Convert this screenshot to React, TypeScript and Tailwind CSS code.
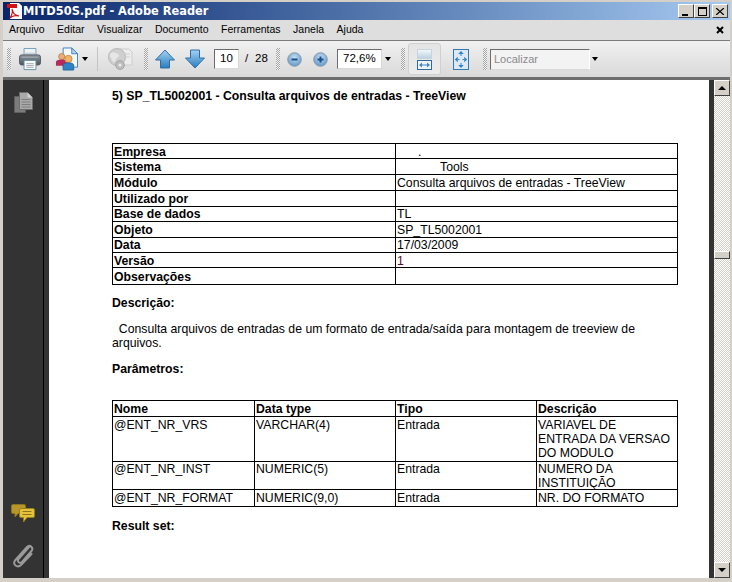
import React from "react";

const Grip = ({ className = "" }: { className?: string }) => (
  <div className={`w-[4px] h-[22px] shrink-0 bg-[repeating-conic-gradient(#a3a3a3_0_25%,#f4f4f4_0_50%)] bg-[length:2px_2px] ${className}`} />
);

const Caret = ({ className = "" }: { className?: string }) => (
  <svg width="6" height="4" viewBox="0 0 6 4" className={`shrink-0 ${className}`}>
    <path d="M0 0h6L3 4z" fill="#000" />
  </svg>
);

const Printer = () => (
  <svg width="22" height="23" viewBox="0 0 24 25" className="shrink-0">
    <defs>
      <linearGradient id="pb" x1="0" y1="0" x2="0" y2="1">
        <stop offset="0" stopColor="#8c959c" />
        <stop offset="1" stopColor="#4e565d" />
      </linearGradient>
    </defs>
    <path d="M5.500.5h13v8h-13z" fill="#eef3f6" stroke="#6f9db3" />
    <path d="M6.500 5h11v3h-11z" fill="#c4d3dc" />
    <rect x=".5" y="7.500" width="23" height="11" rx="2.500" fill="url(#pb)" stroke="#50585f" />
    <path d="M3 10h18" stroke="#a9b1b7" />
    <path d="M5.500 13.500h13v10h-13z" fill="#f7f9fa" stroke="#5f8da5" />
    <path d="M8 17h8M8 19h8M8 21h8" stroke="#9aa6ae" />
  </svg>
);

const Share = () => (
  <svg width="23" height="24" viewBox="0 0 24 24" className="shrink-0">
    <path d="M8.500 .5h9l6 6v14h-15z" fill="#f5f9fd" stroke="#3f7fc0" />
    <path d="M17.500 .5v6h6z" fill="#bcd6ee" stroke="#3f7fc0" />
    <circle cx="7" cy="9.500" r="3.200" fill="#e9ae7c" stroke="#c58546" />
    <path d="M1 19v-4c0-1.500 2-2.500 6-2.500s6 1 6 2.500v4z" fill="#b52a58" />
    <circle cx="14" cy="12" r="3.800" fill="#f2b36a" stroke="#cf8a3a" />
    <path d="M8.500 23.500v-5c0-1.500 2.500-2.500 5.500-2.500s5.500 1 5.500 2.500v5z" fill="#2f82c4" stroke="#23679f" />
  </svg>
);

const Globe = () => (
  <svg width="26" height="24" viewBox="0 0 26 24" className="shrink-0">
    <path d="M13 2h9l3 3v13H13z" fill="#ededed" stroke="#cdcdcd" />
    <circle cx="10" cy="10" r="8.500" fill="#cfcfcf" stroke="#b8b8b8" />
    <path d="M4 6c3-2 5 0 7 1s1 3-1 4-1 4-3 4-2-3-3-4-2-3 0-5z" fill="#e6e6e6" />
    <path d="M17 7h6M17 10h6" stroke="#cfcfcf" />
    <circle cx="13" cy="18" r="4.400" fill="#bdbdbd" stroke="#a6a6a6" />
    <circle cx="13" cy="18" r="1.500" fill="#ececec" />
  </svg>
);

const Arrow = ({ down = false }: { down?: boolean }) => (
  <svg width="20" height="20" viewBox="0 0 20 20" className="shrink-0">
    <defs>
      <linearGradient id={down ? "ad" : "au"} x1="0" y1="0" x2="0" y2="1">
        <stop offset="0" stopColor="#a3d3f3" />
        <stop offset="1" stopColor="#2a7cbf" />
      </linearGradient>
    </defs>
    <path
      d={down ? "M5.500 1h9v8h5L10 19 .5 9h5z" : "M10 1l9.500 10h-5v8h-9v-8h-5z"}
      fill={`url(#${down ? "ad" : "au"})`}
      stroke="#2e6ea5"
      strokeLinejoin="round"
    />
  </svg>
);

const Zoomer = ({ plus = false }: { plus?: boolean }) => (
  <svg width="15" height="15" viewBox="0 0 15 15" className="shrink-0">
    <defs>
      <radialGradient id={plus ? "zp" : "zm"} cx="0.5" cy="0.35" r="0.65">
        <stop offset="0" stopColor="#c5def2" />
        <stop offset="1" stopColor="#5f98c9" />
      </radialGradient>
    </defs>
    <circle cx="7.500" cy="7.500" r="6.800" fill={`url(#${plus ? "zp" : "zm"})`} stroke="#8e9ba8" />
    <path d={plus ? "M4.500 7.500h6M7.500 4.500v6" : "M4.500 7.500h6"} stroke="#164f8c" strokeWidth="2" />
  </svg>
);

const FitWidth = () => (
  <svg width="15" height="21" viewBox="0 0 15 21" className="shrink-0">
    <defs>
      <linearGradient id="fw" x1="0" y1="0" x2="0" y2="1">
        <stop offset="0" stopColor="#f6f9fb" />
        <stop offset="1" stopColor="#b9d0e2" />
      </linearGradient>
    </defs>
    <rect x=".5" y=".5" width="14" height="9" fill="url(#fw)" stroke="#c7d4de" />
    <rect x=".5" y="11.500" width="14" height="9" fill="#eef4f9" stroke="#2f6a9e" />
    <path d="M3 16h9" stroke="#3d86c2" />
    <path d="M2 16l3-2.500v5zM13 16l-3-2.500v5z" fill="#3d86c2" />
  </svg>
);

const FitPage = () => (
  <svg width="16" height="21" viewBox="0 0 16 21" className="shrink-0">
    <rect x=".5" y=".5" width="15" height="20" fill="#dce9f4" stroke="#3478ad" />
    <path d="M8 2l-2.800 3h5.600zM8 19l-2.800-3h5.600zM1.800 10.500l3-2.800v5.600zM14.200 10.500l-3-2.800v5.600z" fill="#2f83c4" />
    <path d="M8 5v2M8 14v2M5 10.500h1.500M9.500 10.500H11" stroke="#2f83c4" />
  </svg>
);

const PagesIcon = () => (
  <svg width="19" height="21" viewBox="0 0 19 21" className="shrink-0">
    <path d="M.5 4.500h11v16H.5z" fill="#7b7b7b" stroke="#5f5f5f" />
    <path d="M5.500.5h8l5 5v12h-13z" fill="#a9a9a9" stroke="#6e6e6e" />
    <path d="M13.500.5v5h5z" fill="#d0d0d0" />
    <path d="M7.500 7.500h9M7.500 10h9M7.500 12.500h9M7.500 15h9" stroke="#7e7e7e" />
  </svg>
);

const Comments = () => (
  <svg width="24" height="19" viewBox="0 0 24 19" className="shrink-0">
    <path d="M2 .5h11A1.500 1.500 0 0 1 14.500 2v6A1.500 1.500 0 0 1 13 9.500H7L4 13V9.500H2A1.500 1.500 0 0 1 .5 8V2A1.500 1.500 0 0 1 2 .5z" fill="#b8962a" stroke="#8a7420" />
    <path d="M10 4.500h12A1.500 1.500 0 0 1 23.500 6v6a1.500 1.500 0 0 1-1.500 1.500h-6L12.500 18v-4.500H10A1.500 1.500 0 0 1 8.500 12V6A1.500 1.500 0 0 1 10 4.500z" fill="#e5c23a" stroke="#94801f" />
    <path d="M11.500 7.500h9M11.500 10.500h9" stroke="#8a7420" />
  </svg>
);

const Clip = () => (
  <svg width="22" height="24" viewBox="0 0 22 24" className="shrink-0">
    <path
      d="M17 3L6.500 15c-2 2.500 1.500 5 3.500 3L19.500 7c2.500-3-1.500-7-4.500-4L3 16.500c-3 4 2.500 8 6 4.500l10.500-11"
      fill="none"
      stroke="#9a9a9a"
      strokeWidth="2"
      strokeLinecap="round"
    />
  </svg>
);

const WinBtn = ({ children, className = "" }: { children: React.ReactNode; className?: string }) => (
  <div className={`w-[16px] h-[14px] bg-[#d4d0c8] border border-t-white border-l-white border-r-[#404040] border-b-[#404040] flex items-center justify-center ${className}`}>
    {children}
  </div>
);

const rows1: { k: string; v: React.ReactNode; h: string; nudge?: boolean }[] = [
  { k: "Empresa", v: <span className="pl-[21px]">.</span>, h: "h-[15px]", nudge: true },
  { k: "Sistema", v: <span className="pl-[43px]">Tools</span>, h: "h-[16px]" },
  { k: "Módulo", v: "Consulta arquivos de entradas - TreeView", h: "h-[16px]" },
  { k: "Utilizado por", v: "", h: "h-[16px]" },
  { k: "Base de dados", v: "TL", h: "h-[15px]" },
  { k: "Objeto", v: "SP_TL5002001", h: "h-[16px]" },
  { k: "Data", v: "17/03/2009", h: "h-[15px]" },
  { k: "Versão", v: <span className="text-[#5a0a28]">1</span>, h: "h-[15px]", nudge: true },
  { k: "Observações", v: "", h: "h-[17px]", nudge: true },
];

const rows2 = [
  { h: "h-[45px]", inner: "h-[44px] pt-[1px]", c: ["@ENT_NR_VRS", "VARCHAR(4)", "Entrada", "VARIAVEL DE ENTRADA DA VERSAO DO MODULO"] },
  { h: "h-[28px]", inner: "h-[27px]", c: ["@ENT_NR_INST", "NUMERIC(5)", "Entrada", "NUMERO DA INSTITUIÇÃO"] },
  { h: "h-[17px]", inner: "h-[16px] pt-[1px]", c: ["@ENT_NR_FORMAT", "NUMERIC(9,0)", "Entrada", "NR. DO FORMATO"] },
];

const field = "h-[20px] shrink-0 bg-white border border-t-[#6c6c6c] border-l-[#6c6c6c] border-r-[#d8d8d8] border-b-[#d8d8d8] flex items-center";

export default function App() {
  return (
    <div className="w-[732px] h-[582px] overflow-hidden bg-[#d4d0c8] pt-[2px] pl-[3px] pb-[4px] pr-[2px] flex flex-col font-['Liberation_Sans',sans-serif] text-black">
      {/* Title bar */}
      <div className="h-[18px] shrink-0 flex items-center bg-gradient-to-r from-[#0a246a] to-[#a6caf0] pl-[4px] pr-[2px]">
        <svg width="16" height="16" viewBox="0 0 16 16" className="shrink-0">
          <path d="M3 0h9l3 3v13H3z" fill="#fff" />
          <path d="M0 1h10v4H0z" fill="#d0121b" />
          <path d="M5 6c1 4 2 6 7 7-4-1-7 0-9 2 2-3 3-6 2-9z" fill="none" stroke="#d0121b" strokeWidth="1.200" />
        </svg>
        <span className="text-white font-bold text-[11.4px] font-['DejaVu_Sans',sans-serif] leading-[18px]">MITD50S.pdf - Adobe Reader</span>
        <div className="ml-auto flex">
          <WinBtn><div className="w-[6px] h-[2px] bg-black mt-[7px] mr-[2px]" /></WinBtn>
          <WinBtn><div className="w-[9px] h-[9px] border border-black border-t-2" /></WinBtn>
          <WinBtn className="ml-[2px]">
            <svg width="8" height="7" viewBox="0 0 8 7"><path d="M0 0l8 7M8 0L0 7" stroke="#000" strokeWidth="1.300" /></svg>
          </WinBtn>
        </div>
      </div>

      {/* Menu bar */}
      <div className="h-[20px] shrink-0 bg-[#dedede] flex items-center pl-[6px] pr-[6px] text-[10.5px] gap-[12.5px]">
        {["Arquivo", "Editar", "Visualizar", "Documento", "Ferramentas", "Janela", "Ajuda"].map((m) => (
          <span key={m}>{m}</span>
        ))}
        <svg width="8" height="8" viewBox="0 0 8 8" className="ml-auto"><path d="M1 1l6 6M7 1L1 7" stroke="#000" strokeWidth="2" /></svg>
      </div>

      {/* Toolbar */}
      <div className="h-[37px] shrink-0 border-t border-[#7c7c7c] bg-gradient-to-b from-[#f1f1f1] to-[#d9d9d9] flex items-center text-[11.5px] pl-[4px]">
        <Grip />
        <div className="ml-[8px]"><Printer /></div>
        <div className="ml-[14px]"><Share /></div>
        <Caret className="ml-[4px]" />
        <div className="ml-[9px] w-px h-[24px] bg-[#c4c4c4]" />
        <div className="ml-[9px]"><Globe /></div>
        <Grip className="ml-[11px]" />
        <div className="ml-[7px]"><Arrow /></div>
        <div className="ml-[10px]"><Arrow down /></div>
        <div className={`ml-[9px] w-[25px] justify-center ${field}`}>10</div>
        <span className="ml-[6px] w-[4px]">/</span>
        <span className="ml-[6px] w-[12px]">28</span>
        <Grip className="ml-[9px]" />
        <div className="ml-[7px]"><Zoomer /></div>
        <div className="ml-[11px]"><Zoomer plus /></div>
        <div className={`ml-[9px] w-[45px] pl-[5px] ${field}`}>72,6%</div>
        <Caret className="ml-[3px]" />
        <Grip className="ml-[10px]" />
        <div className="ml-[3px] w-[33px] h-[32px] shrink-0 rounded-[3px] bg-gradient-to-b from-[#e4e4e4] to-[#ececec] border border-[#d0d0d0] flex items-center justify-center"><FitWidth /></div>
        <div className="ml-[12px]"><FitPage /></div>
        <Grip className="ml-[14px]" />
        <div className="ml-[3px] w-[100px] h-[21px] shrink-0 bg-[#f3f3f3] border border-t-[#6c6c6c] border-l-[#6c6c6c] border-r-white border-b-[#d8d8d8] flex items-center pl-[3px] text-[11px] text-[#8a8a8a]">Localizar</div>
        <Caret className="ml-[2px]" />
      </div>

      {/* Content */}
      <div className="flex-1 min-h-0 flex border-t-[3px] border-[#6e6e6e] bg-[#333333]">
        <div className="w-[41px] shrink-0 border-r border-black flex flex-col items-center pt-[12px] pb-[10px]">
          <PagesIcon />
          <div className="mt-auto flex flex-col items-center">
            <Comments />
            <div className="mt-[21px]"><Clip /></div>
          </div>
        </div>
        <div className="w-[5px] shrink-0" />
        <div className="w-[660px] shrink-0 bg-white pl-[63px] overflow-hidden text-[12.25px] leading-[14px]">
          <p className="font-bold mt-[9px]">5) SP_TL5002001 - Consulta arquivos de entradas - TreeView</p>
          <table className="mt-[40px] w-[565px] table-fixed border-collapse">
            <colgroup>
              <col className="w-[283px]" />
              <col className="w-[282px]" />
            </colgroup>
            <tbody>
              {rows1.map((r) => (
                <tr key={r.k} className={r.h}>
                  <td className={`border border-black pl-[1px] font-bold align-middle ${r.nudge ? "pt-[2px] leading-[12px]" : ""}`}>{r.k}</td>
                  <td className={`border border-black pl-[1px] align-middle whitespace-nowrap ${r.nudge ? "pt-[2px] leading-[12px]" : ""}`}>{r.v}</td>
                </tr>
              ))}
            </tbody>
          </table>
          <p className="font-bold mt-[11px]">Descrição:</p>
          <p className="mt-[12px] w-[540px]">&nbsp;&nbsp;Consulta arquivos de entradas de um formato de entrada/saída para montagem de treeview de arquivos.</p>
          <p className="font-bold mt-[12px]">Parâmetros:</p>
          <table className="mt-[24px] w-[565px] table-fixed border-collapse">
            <colgroup>
              <col className="w-[142px]" />
              <col className="w-[141px]" />
              <col className="w-[141px]" />
              <col className="w-[141px]" />
            </colgroup>
            <tbody>
              <tr className="h-[16px] font-bold">
                {["Nome", "Data type", "Tipo", "Descrição"].map((t) => (
                  <td key={t} className="border border-black pl-[1px] align-middle">{t}</td>
                ))}
              </tr>
              {rows2.map((r) => (
                <tr key={r.c[0]} className={r.h}>
                  {r.c.map((t) => (
                    <td key={t} className="border border-black pl-[1px] align-top">
                      <div className={r.inner}>{t}</div>
                    </td>
                  ))}
                </tr>
              ))}
            </tbody>
          </table>
          <p className="font-bold mt-[12px]">Result set:</p>
        </div>
        <div className="w-[5px] shrink-0" />
        {/* Scrollbar */}
        <div className="w-[16px] shrink-0 flex flex-col bg-[repeating-conic-gradient(#d4d0c8_0_25%,#ffffff_0_50%)] bg-[length:2px_2px]">
          <div className="h-[16px] shrink-0 bg-[#d4d0c8] border border-t-white border-l-white border-r-[#404040] border-b-[#404040] flex items-center justify-center">
            <svg width="8" height="4" viewBox="0 0 8 4"><path d="M4 0l4 4H0z" fill="#000" /></svg>
          </div>
          <div className="mt-[155px] h-[8px] shrink-0 bg-[#d4d0c8] border border-t-white border-l-white border-r-[#404040] border-b-[#404040]" />
          <div className="mt-auto h-[16px] shrink-0 bg-[#d4d0c8] border border-t-white border-l-white border-r-[#404040] border-b-[#404040] flex items-center justify-center">
            <svg width="8" height="4" viewBox="0 0 8 4"><path d="M4 4l4-4H0z" fill="#000" /></svg>
          </div>
        </div>
      </div>
    </div>
  );
}
